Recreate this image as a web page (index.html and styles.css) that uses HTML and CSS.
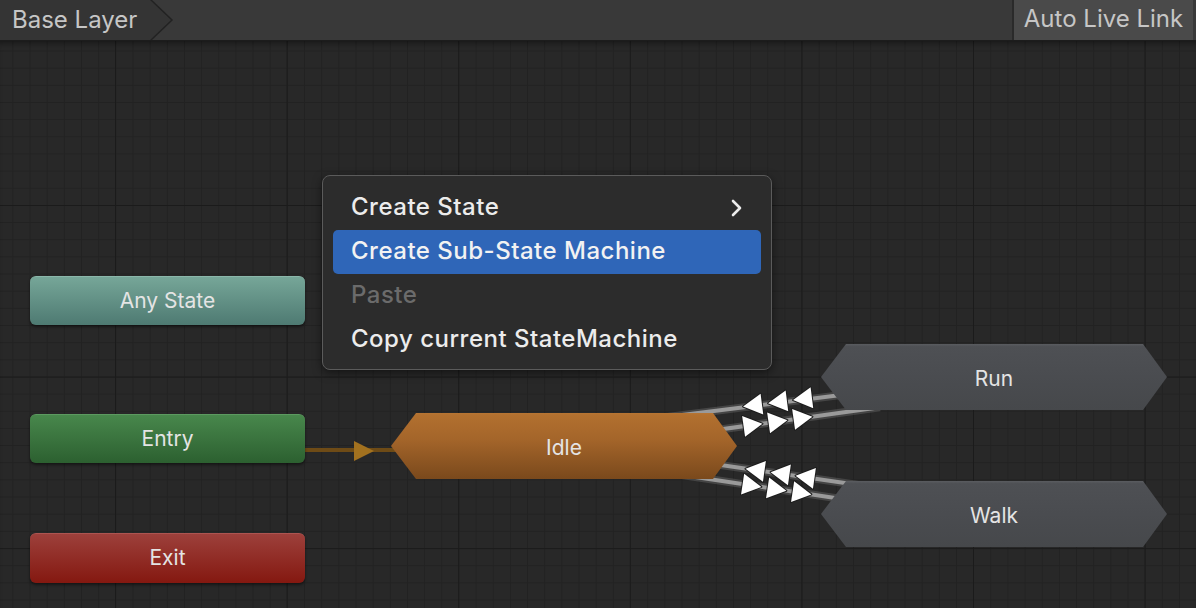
FILE: index.html
```html
<!DOCTYPE html>
<html lang="en">
<head>
<meta charset="utf-8">
<title>Animator</title>
<link rel="stylesheet" href="styles.css">
</head>
<body>
<div class="app">
  <header class="toolbar">
    <div class="crumb"><span class="crumb-label">Base Layer</span></div>
    <div class="spacer"></div>
    <button class="live-link">Auto Live Link</button>
  </header>
  <main class="canvas">
    <svg class="links" viewBox="0 41 1196 567" width="1196" height="567">
      <g class="entry-link">
        <line x1="300" y1="450" x2="400" y2="450"/>
        <polygon points="354,441 374,451 354,461"/>
      </g>
      <g class="trans">
        <line class="halo" x1="650" y1="419.1" x2="900" y2="387.6"/>
        <line class="core" x1="650" y1="419.1" x2="900" y2="387.6"/>
        <line class="halo" x1="680" y1="435.1" x2="880" y2="407.2"/>
        <line class="core" x1="680" y1="435.1" x2="880" y2="407.2"/>
        <line class="halo" x1="660" y1="456.2" x2="900" y2="491"/>
        <line class="core" x1="660" y1="456.2" x2="900" y2="491"/>
        <line class="halo" x1="660" y1="471.7" x2="900" y2="507.7"/>
        <line class="core" x1="660" y1="471.7" x2="900" y2="507.7"/>
      </g>
      <g class="arrows">
        <polygon points="-9.5,0 9.5,-10.5 9.5,10.5" transform="translate(752.5 405.3) rotate(-7.2)"/>
        <polygon points="-9.5,0 9.5,-10.5 9.5,10.5" transform="translate(777.5 402.1) rotate(-7.2)"/>
        <polygon points="-9.5,0 9.5,-10.5 9.5,10.5" transform="translate(802.5 398.9) rotate(-7.2)"/>
        <polygon points="9.5,0 -9.5,-10.5 -9.5,10.5" transform="translate(753 425) rotate(-8)"/>
        <polygon points="9.5,0 -9.5,-10.5 -9.5,10.5" transform="translate(778 421.5) rotate(-8)"/>
        <polygon points="9.5,0 -9.5,-10.5 -9.5,10.5" transform="translate(803 418) rotate(-8)"/>
        <polygon points="-9.5,0 9.5,-10.5 9.5,10.5" transform="translate(755 470) rotate(8)"/>
        <polygon points="-9.5,0 9.5,-10.5 9.5,10.5" transform="translate(780 473.5) rotate(8)"/>
        <polygon points="-9.5,0 9.5,-10.5 9.5,10.5" transform="translate(805 477) rotate(8)"/>
        <polygon points="9.5,0 -9.5,-10.5 -9.5,10.5" transform="translate(752 485.5) rotate(8.5)"/>
        <polygon points="9.5,0 -9.5,-10.5 -9.5,10.5" transform="translate(777 489.3) rotate(8.5)"/>
        <polygon points="9.5,0 -9.5,-10.5 -9.5,10.5" transform="translate(802 493) rotate(8.5)"/>
      </g>
    </svg>

    <div class="node rect any-state"><span>Any State</span></div>
    <div class="node rect entry"><span>Entry</span></div>
    <div class="node rect exit"><span>Exit</span></div>

    <div class="node hex idle"><span>Idle</span></div>
    <div class="node hex gray run"><span>Run</span></div>
    <div class="node hex gray walk"><span>Walk</span></div>

    <div class="menu">
      <div class="menu-item"><span>Create State</span>
        <svg class="chev" width="16" height="20" viewBox="0 0 16 20"><path d="M4 3 L11 10 L4 17"/></svg>
      </div>
      <div class="menu-item active"><span>Create Sub-State Machine</span></div>
      <div class="menu-item disabled"><span>Paste</span></div>
      <div class="menu-item"><span>Copy current StateMachine</span></div>
    </div>
  </main>
</div>
</body>
</html>
```

FILE: styles.css
```css
* { box-sizing: border-box; }
html, body {
  margin: 0;
  padding: 0;
  width: 1196px;
  height: 608px;
  overflow: hidden;
  background: #282828;
  font-family: Inter, "Noto Sans", "Liberation Sans", sans-serif;
}
.app {
  display: flex;
  flex-direction: column;
  width: 1196px;
  height: 608px;
}
.toolbar {
  height: 41px;
  flex: none;
  display: flex;
  align-items: stretch;
  background: #393939;
  border-bottom: 1px solid #1c1c1c;
}
.crumb {
  position: relative;
  width: 174px;
  display: flex;
  align-items: center;
  padding-left: 12px;
  background: #343434;
  clip-path: polygon(0 0, 152px 0, 173px 20px, 152px 40px, 0 40px);
}
.crumb::after {
  content: "";
  position: absolute;
  top: 0;
  left: 0;
  width: 174px;
  height: 40px;
  background: #222;
  clip-path: polygon(150px 0, 153px 0, 174px 20px, 153px 40px, 150px 40px, 171px 20px);
}
.crumb-label {
  color: #c6c6c6;
  font-size: 24px;
  padding-bottom: 1px;
}
.spacer { flex: 1; }
.live-link {
  width: 181px;
  margin-right: 3px;
  border: none;
  border-left: 2px solid #2a2a2a;
  background: #4a4a4a;
  color: #c6c6c6;
  font-family: inherit;
  font-size: 24px;
  padding: 0 0 3px 0;
  text-align: center;
}
.canvas {
  position: relative;
  flex: 1;
  overflow: hidden;
  background-color: #282828;
  background-image:
    linear-gradient(to right, #1b1b1b 1px, transparent 1px),
    linear-gradient(to bottom, #1b1b1b 1px, transparent 1px),
    linear-gradient(to right, #222222 1px, transparent 1px),
    linear-gradient(to bottom, #222222 1px, transparent 1px);
  background-size: 171.6px 171.6px, 171.6px 171.6px, 17.16px 17.16px, 17.16px 17.16px;
  background-position: 115px 0, 0 164px, 12.4px 0, 0 9.5px;
  box-shadow: inset 0 6px 6px -4px rgba(0,0,0,0.45);
}
.links {
  position: absolute;
  left: 0;
  top: 0;
}
.entry-link line {
  stroke: #6e4b16;
  stroke-width: 4;
}
.entry-link polygon {
  fill: #a2711f;
}
.trans .halo {
  stroke: rgba(140,140,140,0.3);
  stroke-width: 8;
}
.trans .core {
  stroke: #9a9a9a;
  stroke-width: 4;
}
.arrows polygon {
  fill: #ffffff;
  stroke: #1c1c1c;
  stroke-width: 2;
  paint-order: stroke;
  stroke-linejoin: round;
}
.node {
  position: absolute;
  display: flex;
  align-items: center;
  justify-content: center;
  color: #e4e4e4;
  font-size: 21px;
}
.rect {
  left: 30px;
  width: 275px;
  height: 49px;
  border-radius: 6px;
  box-shadow: 0 2px 3px rgba(0,0,0,0.45);
  padding-bottom: 2px;
}
.any-state {
  top: 235px;
  background: linear-gradient(#76a698, #4e7a72);
  border-top: 1px solid #8bb7aa;
}
.entry {
  top: 373px;
  background: linear-gradient(#48874c, #2c6030);
  border-top: 1px solid #5c9a60;
}
.exit {
  top: 492px;
  height: 50px;
  background: linear-gradient(#9d403b, #841810);
  border-top: 1px solid #ad5450;
}
.hex {
  width: 346px;
  height: 66px;
  clip-path: polygon(25px 0, calc(100% - 24px) 0, 100% 50%, calc(100% - 24px) 100%, 25px 100%, 0 50%);
  padding-top: 2px;
}
.idle {
  left: 391px;
  top: 372px;
  background: linear-gradient(#b77533 0, #b2702f 3%, #a4652a 40%, #7a491c 100%);
}
.gray {
  left: 821px;
  background: linear-gradient(#5a5c60 0, #4e5054 4%, #4a4c50 50%, #46484b 100%);
}
.run { top: 303px; }
.walk { top: 440px; }

.menu {
  position: absolute;
  left: 322px;
  top: 134px;
  width: 450px;
  height: 195px;
  padding: 10px 10px 0 10px;
  background: #2c2c2c;
  border: 1px solid #5b5b5b;
  border-radius: 8px;
  box-shadow: 0 3px 10px rgba(0,0,0,0.5);
}
.menu-item {
  height: 44px;
  display: flex;
  align-items: center;
  justify-content: space-between;
  padding: 0 18px 3px 18px;
  border-radius: 5px;
  color: #ececec;
  font-size: 24px;
  font-weight: 500;
  letter-spacing: 0.5px;
}
.menu-item.active {
  background: #2f66b8;
  color: #f2f2f2;
}
.menu-item.disabled {
  color: #6b6b6b;
}
.chev {
  margin-right: -2px;
  margin-bottom: -3px;
}
.chev path {
  fill: none;
  stroke: #ececec;
  stroke-width: 2.6;
  stroke-linecap: round;
  stroke-linejoin: round;
}
```
